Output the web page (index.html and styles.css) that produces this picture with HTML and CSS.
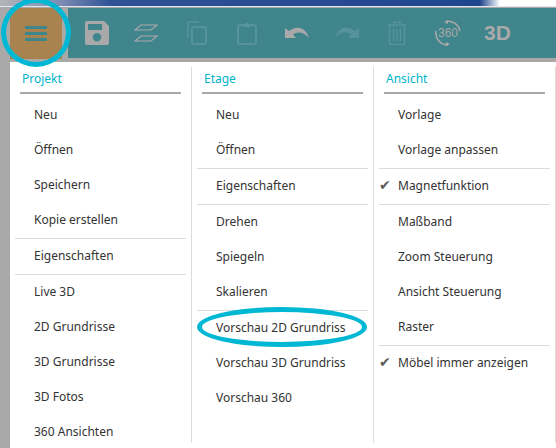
FILE: index.html
```html
<!DOCTYPE html>
<html lang="de">
<head>
  <meta charset="UTF-8" />
  <title>Menü</title>
  <link rel="stylesheet" href="styles.css">
</head>
<body>
  <div class="titlebar"></div>

  <div class="top">
    <div class="burger"><span></span><span></span><span></span></div>
    <div class="toolbar">
      <svg class="tool save" width="24" height="24" viewBox="0 0 24 24"><path d="M2 0h17l5 5v17a2 2 0 0 1-2 2H2a2 2 0 0 1-2-2V2a2 2 0 0 1 2-2zM3 3v6h14V3zM12 12a4.2 4.2 0 1 0 0 8.400a4.200 4.200 0 0 0 0-8.400z" fill-rule="evenodd"/></svg>
      <svg class="tool layers" width="24" height="18" viewBox="0 0 24 18"><path d="M7 1h16l-6 5H1zM7 12h16l-6 5H1z" fill="none" stroke-width="1.200"/></svg>
      <svg class="tool off copy" width="20" height="24" viewBox="0 0 20 24"><path d="M12 1H3a2 2 0 0 0-2 2v14" fill="none" stroke-width="1.600"/><rect x="5" y="6" width="14" height="17" rx="2" fill="none" stroke-width="2"/></svg>
      <svg class="tool off clip" width="20" height="24" viewBox="0 0 20 24"><path d="M6 4H3a2 2 0 0 0-2 2v15a2 2 0 0 0 2 2h14a2 2 0 0 0 2-2V6a2 2 0 0 0-2-2h-3" fill="none" stroke-width="2"/><path d="M6 6V3h2.500a1.500 1.500 0 0 1 3 0H14v3z" class="fill"/></svg>
      <svg class="tool undo" width="24" height="12" viewBox="0 0 24 12"><path d="M0 1l4 3C8 1 12 0 15 1c4 1 7 4 9 10-3-3-5-5-9-5.500-3-.3-5 .5-7 2l3 3.500H0z" class="fill"/></svg>
      <svg class="tool off redo" width="24" height="12" viewBox="0 0 24 12"><path d="M24 1l-4 3C16 1 12 0 9 1 5 2 2 5 0 11c3-3 5-5 9-5.500 3-.3 5 .5 7 2l-3 3.500h11z" class="fill"/></svg>
      <svg class="tool off trash" width="18" height="24" viewBox="0 0 18 24"><path d="M0 4h18M6 3V1h6v2M1.500 5v17a1.500 1.500 0 0 0 1.500 1.500h12a1.500 1.500 0 0 0 1.500-1.500V5M5.500 8v12M9 8v12M12.500 8v12" fill="none" stroke-width="1.500"/></svg>
      <div class="tool turn">
        <svg width="26" height="26" viewBox="0 0 26 26"><path d="M11 1.500a12 12 0 0 1 14 9.500M1 11a12 12 0 0 0 12 14" fill="none" stroke-width="1.500"/><path d="M9 2l4-2 0 4zM15 24l-4 2 0-4z" class="fill"/></svg>
        <span>360</span>
      </div>
      <div class="tool three">3D</div>
    </div>
  </div>

  <div class="menu">
    <div class="col">
      <h3>Projekt</h3>
      <a>Neu</a>
      <a>Öffnen</a>
      <a>Speichern</a>
      <a>Kopie erstellen</a>
      <hr>
      <a>Eigenschaften</a>
      <hr>
      <a>Live 3D</a>
      <a>2D Grundrisse</a>
      <a>3D Grundrisse</a>
      <a>3D Fotos</a>
      <a>360 Ansichten</a>
    </div>
    <div class="col">
      <h3>Etage</h3>
      <a>Neu</a>
      <a>Öffnen</a>
      <hr>
      <a>Eigenschaften</a>
      <hr>
      <a>Drehen</a>
      <a>Spiegeln</a>
      <a>Skalieren</a>
      <hr>
      <a>Vorschau 2D Grundriss</a>
      <a>Vorschau 3D Grundriss</a>
      <a>Vorschau 360</a>
    </div>
    <div class="col">
      <h3>Ansicht</h3>
      <a>Vorlage</a>
      <a>Vorlage anpassen</a>
      <hr>
      <a class="checked">Magnetfunktion</a>
      <hr>
      <a>Maßband</a>
      <a>Zoom Steuerung</a>
      <a>Ansicht Steuerung</a>
      <a>Raster</a>
      <hr>
      <a class="checked">Möbel immer anzeigen</a>
    </div>
  </div>

  <!-- hand drawn marks on top of the screenshot -->
  <div class="ring ring-burger"></div>
  <div class="ring ring-item"></div>
</body>
</html>
```

FILE: styles.css
```css
html, body {
  margin: 0;
  padding: 0;
  height: 448px;
  overflow: hidden;
  background: #a9a9a9;
  font-family: 'Noto Sans', Tahoma, sans-serif;
  font-size: 12px;
  color: #333;
}
.titlebar {
  height: 6px;
  border-bottom: 1px solid #dfe4ee;
  background: linear-gradient(to right, #b4b4b8 0, #7f8db4 60px, #2f5296 110px, #20468f 480px, #ffffff 500px);
}
.top {
  display: flex;
  height: 55px;
  background: #a9a9a9;
}
.burger {
  width: 52px;
  height: 51px;
  margin: 1px 6px 0 10px;
  background: #a8834f;
  display: flex;
  flex-direction: column;
  justify-content: center;
  align-items: center;
  gap: 3px;
}
.burger span {
  width: 22px;
  height: 3px;
  background: #3f858c;
}
.toolbar {
  flex: 1;
  height: 50px;
  margin-top: 1px;
  background: #40858c;
  display: flex;
  align-items: center;
}
.tool {
  flex: none;
  stroke: #a9a9a9;
  fill: #a9a9a9;
}
.tool .fill {
  stroke: none;
}
.tool.off {
  stroke: #56939a;
  fill: #56939a;
}
.save { margin-left: 17px; stroke: none; }
.layers { margin-left: 25px; }
.copy { margin-left: 29px; }
.clip { margin-left: 30px; }
.undo { margin-left: 28px; }
.redo { margin-left: 26px; }
.trash { margin-left: 29px; }
.turn {
  width: 26px;
  height: 26px;
  margin-left: 29px;
  position: relative;
}
.turn svg {
  display: block;
}
.turn span {
  position: absolute;
  left: 3px;
  top: 6px;
  font-size: 12px;
  line-height: 14px;
  color: #a9a9a9;
  font-family: 'Liberation Sans', sans-serif;
}
.three {
  margin-left: 23px;
  font-family: 'Liberation Sans', sans-serif;
  font-weight: 700;
  font-size: 21px;
  color: #a9a9a9;
}
.menu {
  display: grid;
  grid-template-columns: 182px 182px 182px;
  margin: 0 0 0 10px;
  height: 386px;
  background: #fff;
  padding-top: 5px;
  box-sizing: border-box;
}
.col {
  height: 376px;
  padding: 0 5px;
  box-sizing: border-box;
  border-right: 1px solid #dcdcdc;
}
.col h3 {
  margin: 0 5px 4px;
  padding: 0 0 5px 2px;
  height: 20px;
  line-height: 24px;
  border-bottom: 2px solid #a9a9a9;
  font-size: 12px;
  font-weight: 400;
  color: #00b4cc;
}
.col a {
  display: block;
  height: 35px;
  line-height: 33px;
  padding-left: 19px;
  white-space: nowrap;
  position: relative;
}
.col hr {
  height: 1px;
  margin: 0;
  border: 0;
  background: #dcdcdc;
}
.checked::before {
  content: '✔';
  position: absolute;
  left: 0;
  width: 19px;
  color: #5f5a5a;
  font-family: 'DejaVu Sans', sans-serif;
  font-size: 14px;
}
.ring {
  position: absolute;
  border: 5px solid #00b8d4;
  border-radius: 50%;
  box-sizing: border-box;
}
.ring-burger {
  left: 1px;
  top: -2px;
  width: 70px;
  height: 69px;
}
.ring-item {
  left: 197px;
  top: 307px;
  width: 170px;
  height: 40px;
}
```
